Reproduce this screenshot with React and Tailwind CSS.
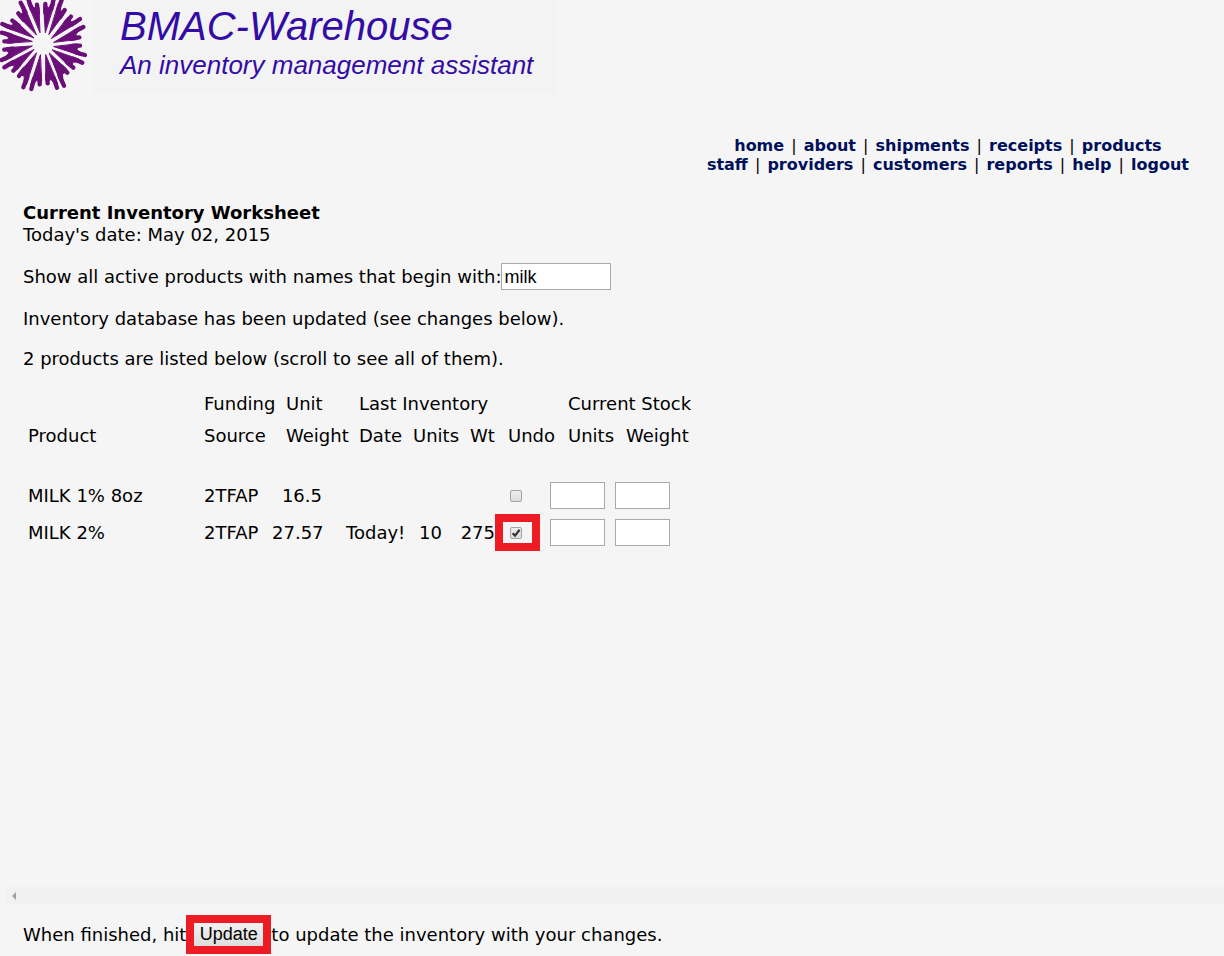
// Each petal: inner tip followed by the ends of its two arms.
const petals = [
  [137, 165, 143, 250, 171, 263],
  [148, 160, 192, 257, 202, 218],
  [157, 150, 220, 203, 247, 188],
  [162, 140, 255, 165, 240, 137],
  [162, 127, 238, 112, 250, 81],
  [155, 115, 240, 57, 213, 50],
  [147, 103, 194, 30, 185, 0],
  [136, 97, 136, 12, 161, -2],
  [120, 97, 111, 14, 85, -2],
  [109, 104, 62, 8, 55, 40],
  [101, 113, 37, 62, 7, 72],
  [96, 124, 5, 98, 13, 124],
  [96, 138, 13, 149, 5, 180],
  [101, 149, 13, 202, 40, 212],
  [109, 159, 57, 228, 70, 262],
  [121, 165, 94, 267, 119, 253],
];

function Petal({ petal: [x, y, a, b, c, d] }) {
  const side = Math.sign((a - x) * (d - y) - (b - y) * (c - x));
  const edge = (ex, ey, s) => {
    const len = Math.hypot(ex - x, ey - y);
    return [
      x + (ex - x) * 0.9 + (s * 5 * (ey - y)) / len,
      y + (ey - y) * 0.9 - (s * 5 * (ex - x)) / len,
    ];
  };
  const [p, q] = edge(a, b, side);
  const [r, s] = edge(c, d, -side);
  const at = (ex, ey, t) => `${x + (ex - x) * t} ${y + (ey - y) * t}`;
  return (
    <g fill="#6a0f78" stroke="#6a0f78" strokeLinecap="round" strokeLinejoin="round">
      <path strokeWidth="3" d={`M${x} ${y}L${p} ${q}L${at(a, b, 0.95)}L${at((a + c) / 2, (b + d) / 2, 0.8)}L${at(c, d, 0.95)}L${r} ${s}Z`} />
      <path fill="none" strokeWidth="13" d={`M${at(a, b, 0.7)}L${a} ${b}M${at(c, d, 0.7)}L${c} ${d}`} />
    </g>
  );
}

function Logo() {
  return (
    <svg viewBox="0 0 282 282" className="size-[94px] shrink-0" aria-hidden="true">
      <rect width="282" height="282" fill="#f6f5f6" />
      {petals.map((petal) => (
        <Petal key={petal.join()} petal={petal} />
      ))}
    </svg>
  );
}

const navRows = [
  ["home", "about", "shipments", "receipts", "products"],
  ["staff", "providers", "customers", "reports", "help", "logout"],
];

const products = [
  { name: "MILK 1% 8oz", source: "2TFAP", weight: "16.5", date: "", units: "", wt: "", undo: false },
  { name: "MILK 2%", source: "2TFAP", weight: "27.57", date: "Today!", units: "10", wt: "275", undo: true },
];

const field = "h-[27px] border border-[#a9a9a9] bg-white px-[2px] font-['Liberation_Sans',Arial,sans-serif] text-lg text-black";

function StockInput({ label }) {
  return <input type="text" aria-label={label} className={`${field} block w-[55px]`} />;
}

function UndoBox({ name, checked }) {
  return (
    <span className={`grid h-[37px] w-[45px] place-items-center border-8 pr-[3px] ${checked ? "border-[#ed1c24]" : "border-transparent"}`}>
      <span className="relative grid size-3">
        <input
          type="checkbox"
          defaultChecked={checked}
          aria-label={`Undo ${name}`}
          className="peer size-3 appearance-none rounded-[2px] border border-[#a4a4a4] bg-linear-to-b from-[#ededed] to-[#dcdcdc]"
        />
        <svg viewBox="0 0 12 12" className="pointer-events-none absolute inset-0 hidden size-3 peer-checked:block" aria-hidden="true">
          <path d="M2.6 6.2 5 8.6 9.6 2.8" fill="none" stroke="#333" strokeWidth="2.2" />
        </svg>
      </span>
    </span>
  );
}

export default function App() {
  return (
    <div className="flex min-h-screen flex-col bg-[#f5f5f5] font-['DejaVu_Sans',Verdana,sans-serif] text-lg leading-[22px] text-black">
      <header className="flex self-start bg-[#f3f3f3] pr-6 font-['Liberation_Sans',Arial,sans-serif] text-[#330ba5] italic">
        <Logo />
        <div className="pl-[26px]">
          <h1 className="pt-1 text-[40px] leading-[44px]">BMAC-Warehouse</h1>
          <p className="pt-[3px] text-[26px] leading-7">An inventory management assistant</p>
        </div>
      </header>

      <nav className="mt-[42px] mr-[35px] self-end text-center text-base leading-[19px]">
        {navRows.map((row) => (
          <div key={row[0]}>
            {row.map((item, i) => (
              <span key={item}>
                {i > 0 && <span className="mx-[2px]"> | </span>}
                <a href={`#${item}`} className="font-bold text-[#00105a]">{item}</a>
              </span>
            ))}
          </div>
        ))}
      </nav>

      <main className="flex grow flex-col pt-7">
        <div className="px-[23px]">
          <h2 className="font-bold">Current Inventory Worksheet</h2>
          <p>Today's date: May 02, 2015</p>
          <div className="mt-[17px] flex items-center">
            <label htmlFor="prefix">Show all active products with names that begin with:</label>
            <input id="prefix" type="text" defaultValue="milk" className={`${field} w-[110px]`} />
          </div>
          <p className="mt-[18px]">Inventory database has been updated (see changes below).</p>
          <p className="mt-[18px]">2 products are listed below (scroll to see all of them).</p>
        </div>

        <div className="grow pt-[18px] pl-7">
          <table className="w-[662px] table-fixed border-collapse text-left whitespace-nowrap [&_td]:py-0 [&_th]:py-0 [&_th]:font-normal">
            <colgroup>
              <col className="w-[176px]" />
              <col className="w-[68px]" />
              <col className="w-[74px]" />
              <col className="w-[61px]" />
              <col className="w-[45px]" />
              <col className="w-[43px]" />
              <col className="w-[55px]" />
              <col className="w-[65px]" />
              <col className="w-[75px]" />
            </colgroup>
            <thead>
              <tr className="h-8">
                <td />
                <th className="px-0">Funding</th>
                <th className="pr-0 pl-[14px]">Unit</th>
                <th colSpan={4} className="pr-0 pl-[13px]">Last Inventory</th>
                <th colSpan={2} className="pr-0 pl-[18px]">Current Stock</th>
              </tr>
              <tr className="h-8">
                <th className="px-0">Product</th>
                <th className="px-0">Source</th>
                <th className="pr-0 pl-[14px]">Weight</th>
                <th className="pr-0 pl-[13px]">Date</th>
                <th className="pr-0 pl-[6px]">Units</th>
                <th className="pr-0 pl-[18px]">Wt</th>
                <th className="pr-0 pl-[13px]">Undo</th>
                <th className="pr-0 pl-[18px]">Units</th>
                <th className="pr-0 pl-[11px]">Weight</th>
              </tr>
            </thead>
            <tbody className="before:block before:h-[25px]">
              {products.map((p) => (
                <tr key={p.name} className="h-[37px]">
                  <td className="px-0">{p.name}</td>
                  <td className="px-0">{p.source}</td>
                  <td className="pr-6 pl-0 text-right">{p.weight}</td>
                  <td className="px-0">{p.date}</td>
                  <td className="pr-0 pl-3">{p.units}</td>
                  <td className="px-0 text-right">{p.wt}</td>
                  <td className="px-0"><UndoBox name={p.name} checked={p.undo} /></td>
                  <td className="px-0"><StockInput label={`Current units of ${p.name}`} /></td>
                  <td className="px-0"><StockInput label={`Current weight of ${p.name}`} /></td>
                </tr>
              ))}
            </tbody>
          </table>
        </div>

        <div className="ml-[6px] flex h-[17px] items-center bg-[#f1f1f1] pl-[6px]">
          <svg viewBox="0 0 4 8" className="h-2 w-1" aria-hidden="true"><path d="M4 0V8L0 4Z" fill="#a0a0a0" /></svg>
        </div>
        <div className="flex items-center px-[23px] pt-[11px] pb-[2px]">
          <span>When finished, hit</span>
          <button type="button" className="h-[39px] w-[85px] border-8 border-[#ed1c24] bg-linear-to-b from-[#f2f2f2] to-[#dddddd] font-['Liberation_Sans',Arial,sans-serif] text-lg leading-[23px]">Update</button>
          <span>to update the inventory with your changes.</span>
        </div>
      </main>
    </div>
  );
}
